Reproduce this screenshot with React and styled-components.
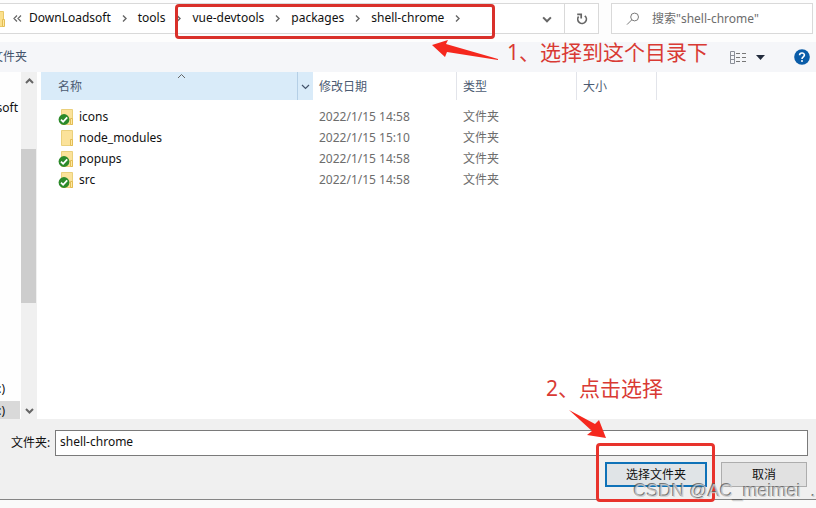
import React from "react";
import styled, { createGlobalStyle } from "styled-components";

const Global = createGlobalStyle`
  *, *::before, *::after { box-sizing: border-box; }
  body {
    margin: 0;
    background: #fafafa;
    color: #111;
    font: 12px/20px "Noto Sans", "Noto Sans CJK SC", sans-serif;
    overflow: hidden;
  }
  button, input { font: inherit; color: inherit; }
  svg { display: block; flex: none; }
`;

const Dialog = styled.div`
  position: relative;
  display: flex;
  flex-direction: column;
  min-height: 100vh;
`;

const PlainButton = styled.button`
  display: flex;
  align-items: center;
  justify-content: center;
  padding: 0;
  border: 0;
  background: none;
`;

const TopBar = styled.header`
  display: flex;
  gap: 12px;
  padding: 3px 3px 8px 0;
  background: #fdfdfd;
`;

const AddressBar = styled.div`
  flex: 1;
  display: flex;
  height: 31px;
  border: 1px solid #d9d9d9;
  border-left: 0;
  background: #fff;
`;

const Crumbs = styled.nav`
  position: relative;
  flex: 1;
  display: flex;
  align-items: center;
`;

const Crumb = styled.a`
  padding-bottom: 2px;
  color: #111;
  text-decoration: none;
`;

const CrumbArrow = styled(PlainButton)`
  width: 27px;
  height: 28px;
`;

const Overflow = styled(PlainButton)`
  width: 24px;
  height: 28px;
`;

const BarButton = styled(PlainButton)`
  width: 34px;
  border-left: ${(p) => (p.$divided ? "1px solid #d9d9d9" : "0")};
`;

const HighlightBox = styled.span`
  position: absolute;
  border: 3px solid #d9302a;
  border-radius: 4px;
  pointer-events: none;
`;

const PathHighlight = styled(HighlightBox)`
  left: 175px;
  top: 0;
  width: 320px;
  height: 35px;
`;

const ButtonHighlight = styled(HighlightBox)`
  left: -9px;
  top: -19px;
  width: 119px;
  height: 59px;
  border-color: #e8332c;
`;

const SearchBox = styled.label`
  display: flex;
  align-items: center;
  gap: 12px;
  width: 202px;
  padding-left: 14px;
  border: 1px solid #d9d9d9;
  background: #fff;
`;

const SearchInput = styled.input`
  flex: 1;
  min-width: 0;
  padding: 0;
  border: 0;
  outline: 0;
  background: none;
  &::placeholder { color: #6d6d6d; opacity: 1; }
`;

const CommandBar = styled.div`
  display: flex;
  align-items: center;
  height: 30px;
  padding-right: 6px;
  background: #f5f6f9;
  color: #43536b;
`;

const NewFolder = styled(PlainButton)`
  justify-content: flex-end;
  width: 27px;
  overflow: hidden;
  white-space: nowrap;
`;

const ViewControls = styled.div`
  display: flex;
  align-items: center;
  gap: 9px;
  margin-left: auto;
  margin-right: 29px;
`;

const Body = styled.div`
  flex: 1;
  display: flex;
  background: #fff;
`;

const Tree = styled.aside`
  display: flex;
  flex-direction: column;
  width: 21px;
  overflow: hidden;
  background: #fefefe;
`;

const TreeItem = styled.div`
  display: flex;
  justify-content: flex-end;
  height: ${(p) => (p.$selected ? "18px" : "22px")};
  margin-top: ${(p) => (p.$first ? "26px" : "0")};
  margin-bottom: ${(p) => (p.$first ? "auto" : "0")};
  margin-right: 1px;
  padding-right: ${(p) => (p.$first ? "2px" : "15px")};
  background: ${(p) => (p.$selected ? "#d9d9d9" : "transparent")};
  white-space: nowrap;
`;

const ScrollBar = styled.div`
  display: flex;
  flex-direction: column;
  width: 16px;
  margin-right: 4px;
  background: #f0f0f0;
`;

const ScrollButton = styled(PlainButton)`
  height: 18px;
`;

const ScrollTrack = styled.div`
  flex: 1;
  display: grid;
  grid-template-rows: 59fr 154fr 98fr;
`;

const ScrollThumb = styled.div`
  grid-row: 2;
  width: 15px;
  background: #cdcdcd;
`;

const FileArea = styled.main`
  flex: 1;
`;

const FileTable = styled.table`
  width: 100%;
  table-layout: fixed;
  border-spacing: 0;
`;

const Column = styled.col`
  width: ${(p) => p.$width};
`;

const HeadCell = styled.th`
  position: relative;
  height: 28px;
  padding: 1px 0 0 ${(p) => (p.$sorted ? "17px" : "6px")};
  border-right: ${(p) => (p.$sorted || p.$last ? "0" : "1px solid #e2e4ea")};
  background: ${(p) => (p.$sorted ? "#d9ebf9" : "transparent")};
  color: #4c5b72;
  font-weight: 400;
  text-align: left;
`;

const SortMark = styled.span`
  position: absolute;
  left: 50%;
  top: 0;
`;

const FilterButton = styled(PlainButton)`
  position: absolute;
  right: 0;
  top: 0;
  width: 16px;
  height: 28px;
  border-left: 1px solid #b5cfe6;
`;

const FileRow = styled.tr`
  height: 21px;
`;

const Spacer = styled.tr`
  height: 6px;
`;

const Cell = styled.td`
  padding: 0 0 0 6px;
  color: #6d6d6d;
`;

const NameCell = styled.td`
  padding: 0 0 0 17px;
`;

const FileName = styled.div`
  display: flex;
  align-items: center;
  gap: 4px;
`;

const Footer = styled.form`
  padding: 11px 8px 12px 0;
  border-bottom: 1px solid #858585;
  margin-bottom: 8px;
  background: #f0f0f0;
`;

const FieldRow = styled.div`
  display: flex;
  align-items: center;
`;

const FieldLabel = styled.label`
  width: 55px;
  padding-left: 11px;
  white-space: nowrap;
`;

const FolderInput = styled.input`
  flex: 1;
  min-width: 0;
  height: 26px;
  padding: 0 4px 3px;
  border: 1px solid #7a7a7a;
  border-radius: 0;
  outline: 0;
  background: #fff;
`;

const Actions = styled.div`
  display: flex;
  justify-content: flex-end;
  gap: 14px;
  margin-top: 6px;
  padding-right: 1px;
`;

const ActionSlot = styled.div`
  position: relative;
`;

const ActionButton = styled.button`
  display: block;
  width: ${(p) => (p.$primary ? "102px" : "86px")};
  height: 25px;
  padding: 0;
  border: ${(p) => (p.$primary ? "2px solid #0f72b8" : "1px solid #adadad")};
  background: ${(p) => (p.$primary ? "#e0e4e7" : "#e1e1e1")};
  line-height: 20px;
`;

const Note = styled.div`
  position: absolute;
  right: ${(p) => p.$right};
  top: ${(p) => p.$top};
  color: #d93a34;
  font-size: 21px;
  line-height: 28px;
  white-space: nowrap;
`;

const NoteArrow = styled.svg`
  position: absolute;
  right: ${(p) => p.$right};
  top: ${(p) => p.$top};
  overflow: visible;
`;

const Watermark = styled.div`
  position: absolute;
  right: 0;
  bottom: 5px;
  display: flex;
  gap: 10px;
  color: rgba(205, 205, 205, 0.8);
  font: 18px/24px "Liberation Sans", Arial, sans-serif;
  text-shadow: -1px -1px 0 rgba(90, 90, 90, 0.8);
  white-space: nowrap;
  pointer-events: none;
`;

const chevronPaths = {
  right: "M3 1.5 6 4.5 3 7.5",
  down: "M1 3 4.5 6.5 8 3",
  up: "M1 6 4.5 2.5 8 6",
};

function Chevron({ to, size = 9, color = "#666", weight = 1.4 }) {
  return (
    <svg width={size} height={size} viewBox="0 0 9 9" fill="none" stroke={color} strokeWidth={weight} aria-hidden="true">
      <path d={chevronPaths[to]} />
    </svg>
  );
}

function FolderIcon({ synced }) {
  return (
    <svg width="17" height="18" viewBox="0 0 17 18" aria-hidden="true">
      <path d="M3.5 1.5h11v15h-11z" fill="#fbe29a" stroke="#ead07c" />
      <path d="M12.5 10.5h2v6h-2z" fill="#ffe9a3" stroke="#e3bd54" />
      {synced && (
        <>
          <circle cx="6" cy="11.5" r="5.4" fill="#2c8a2a" />
          <path d="M3 11.6 5.1 13.8 9.2 9.4" fill="none" stroke="#fff" strokeWidth="1.8" />
        </>
      )}
    </svg>
  );
}

const crumbs = ["DownLoadsoft", "tools", "vue-devtools", "packages", "shell-chrome"];

const files = [
  { name: "icons", date: "2022/1/15 14:58", synced: true },
  { name: "node_modules", date: "2022/1/15 15:10", synced: false },
  { name: "popups", date: "2022/1/15 14:58", synced: true },
  { name: "src", date: "2022/1/15 14:58", synced: true },
];

export default function App() {
  return (
    <>
      <Global />
      <Dialog>
        <TopBar>
          <AddressBar>
            <Crumbs aria-label="Path">
              <svg width="5" height="18" viewBox="0 0 5 18" aria-hidden="true">
                <path d="M0 1.5h3.5v15H0" fill="#fbe08c" stroke="#e9c867" />
                <path d="M2.5 9.5h2v7h-2z" fill="#ffe9a3" stroke="#e3bd54" />
              </svg>
              <Overflow type="button" aria-label="More folders">
                <svg width="9" height="9" viewBox="0 0 9 9" fill="none" stroke="#666" strokeWidth="1.2">
                  <path d="M4 1.5 1 4.5 4 7.5M8 1.5 5 4.5 8 7.5" />
                </svg>
              </Overflow>
              {crumbs.map((name) => (
                <React.Fragment key={name}>
                  <Crumb href="#">{name}</Crumb>
                  <CrumbArrow type="button" aria-label={`Folders in ${name}`}>
                    <Chevron to="right" />
                  </CrumbArrow>
                </React.Fragment>
              ))}
              <PathHighlight />
            </Crumbs>
            <BarButton type="button" aria-label="Recent locations">
              <Chevron to="down" size={10} weight={1.8} />
            </BarButton>
            <BarButton type="button" $divided aria-label="Refresh">
              <svg width="12" height="12" viewBox="0 0 12 12" fill="none" stroke="#666" strokeWidth="1.7">
                <path d="M8.8 2.8A4.3 4.3 0 1 1 2.6 3.6" />
                <path d="M1.2 1.4H5.2V5.4" />
              </svg>
            </BarButton>
          </AddressBar>
          <SearchBox>
            <svg width="14" height="14" viewBox="0 0 14 14" fill="none" stroke="#7a7a7a" aria-hidden="true">
              <circle cx="8.6" cy="5" r="3.9" />
              <path d="M5.8 7.8 1 12.6" />
            </svg>
            <SearchInput aria-label="搜索" placeholder={'搜索"shell-chrome"'} />
          </SearchBox>
        </TopBar>

        <CommandBar>
          <NewFolder type="button">文件夹</NewFolder>
          <ViewControls>
            <PlainButton type="button" aria-label="View">
              <svg width="17" height="13" viewBox="0 0 17 13" fill="none" stroke="#8b8f98">
                <path d="M.5.5h4v12h-4zM.5 4.5h4M.5 8.5h4" />
                <path d="M6 2.5h4M12 2.5h4M6 6.5h4M12 6.5h4M6 10.5h4M12 10.5h4" stroke="#777" />
              </svg>
            </PlainButton>
            <PlainButton type="button" aria-label="View options">
              <svg width="9" height="5" viewBox="0 0 9 5" fill="#222b3c">
                <path d="M0 0h9L4.5 5z" />
              </svg>
            </PlainButton>
          </ViewControls>
          <PlainButton type="button" aria-label="Help">
            <svg width="16" height="16" viewBox="0 0 16 16">
              <circle cx="8" cy="8" r="7.8" fill="#0a5ca8" />
              <path d="M5.6 6.2C5.6 3.2 10.4 3.3 10.4 6.1 10.4 7.8 8 7.9 8 9.9" fill="none" stroke="#fff" strokeWidth="1.6" />
              <circle cx="8" cy="12" r="1" fill="#fff" />
            </svg>
          </PlainButton>
        </CommandBar>

        <Body>
          <Tree>
            <TreeItem $first>soft</TreeItem>
            <TreeItem>:)</TreeItem>
            <TreeItem $selected>:)</TreeItem>
          </Tree>
          <ScrollBar>
            <ScrollButton type="button" aria-label="Scroll up">
              <Chevron to="up" weight={2} />
            </ScrollButton>
            <ScrollTrack>
              <ScrollThumb />
            </ScrollTrack>
            <ScrollButton type="button" aria-label="Scroll down">
              <Chevron to="down" weight={2} />
            </ScrollButton>
          </ScrollBar>
          <FileArea>
            <FileTable>
              <colgroup>
                <Column $width="272px" />
                <Column $width="144px" />
                <Column $width="120px" />
                <Column $width="80px" />
                <Column $width="auto" />
              </colgroup>
              <thead>
                <tr>
                  <HeadCell $sorted scope="col">
                    名称
                    <SortMark>
                      <Chevron to="up" weight={1} />
                    </SortMark>
                    <FilterButton type="button" aria-label="Filter">
                      <Chevron to="down" color="#43536b" weight={1.2} />
                    </FilterButton>
                  </HeadCell>
                  <HeadCell scope="col">修改日期</HeadCell>
                  <HeadCell scope="col">类型</HeadCell>
                  <HeadCell scope="col">大小</HeadCell>
                  <HeadCell as="td" $last />
                </tr>
              </thead>
              <tbody>
                <Spacer />
                {files.map((f) => (
                  <FileRow key={f.name}>
                    <NameCell>
                      <FileName>
                        <FolderIcon synced={f.synced} />
                        {f.name}
                      </FileName>
                    </NameCell>
                    <Cell>{f.date}</Cell>
                    <Cell>文件夹</Cell>
                    <Cell />
                    <Cell />
                  </FileRow>
                ))}
              </tbody>
            </FileTable>
          </FileArea>
        </Body>

        <Footer onSubmit={(e) => e.preventDefault()}>
          <FieldRow>
            <FieldLabel htmlFor="folder">文件夹:</FieldLabel>
            <FolderInput id="folder" defaultValue="shell-chrome" />
          </FieldRow>
          <Actions>
            <ActionSlot>
              <ActionButton $primary type="submit">选择文件夹</ActionButton>
              <ButtonHighlight />
            </ActionSlot>
            <ActionButton type="button">取消</ActionButton>
          </Actions>
        </Footer>

        <Note $right="108px" $top="38px">1、选择到这个目录下</Note>
        <NoteArrow $right="317px" $top="40px" width="67" height="20" viewBox="0 0 67 20" fill="#f5281e" aria-hidden="true">
          <path d="M0 5 16 0 14 4 66 19 66 20 15 12 13 17z" />
        </NoteArrow>
        <Note $right="153px" $top="374px">2、点击选择</Note>
        <NoteArrow $right="209px" $top="410px" width="38" height="28" viewBox="0 0 38 28" fill="#f5281e" aria-hidden="true">
          <path d="M0 0 26 14 30 10 37 28 18 25 23 21z" />
        </NoteArrow>
        <Watermark>
          <span>CSDN @AC_meimei</span>
          <span>.</span>
        </Watermark>
      </Dialog>
    </>
  );
}
